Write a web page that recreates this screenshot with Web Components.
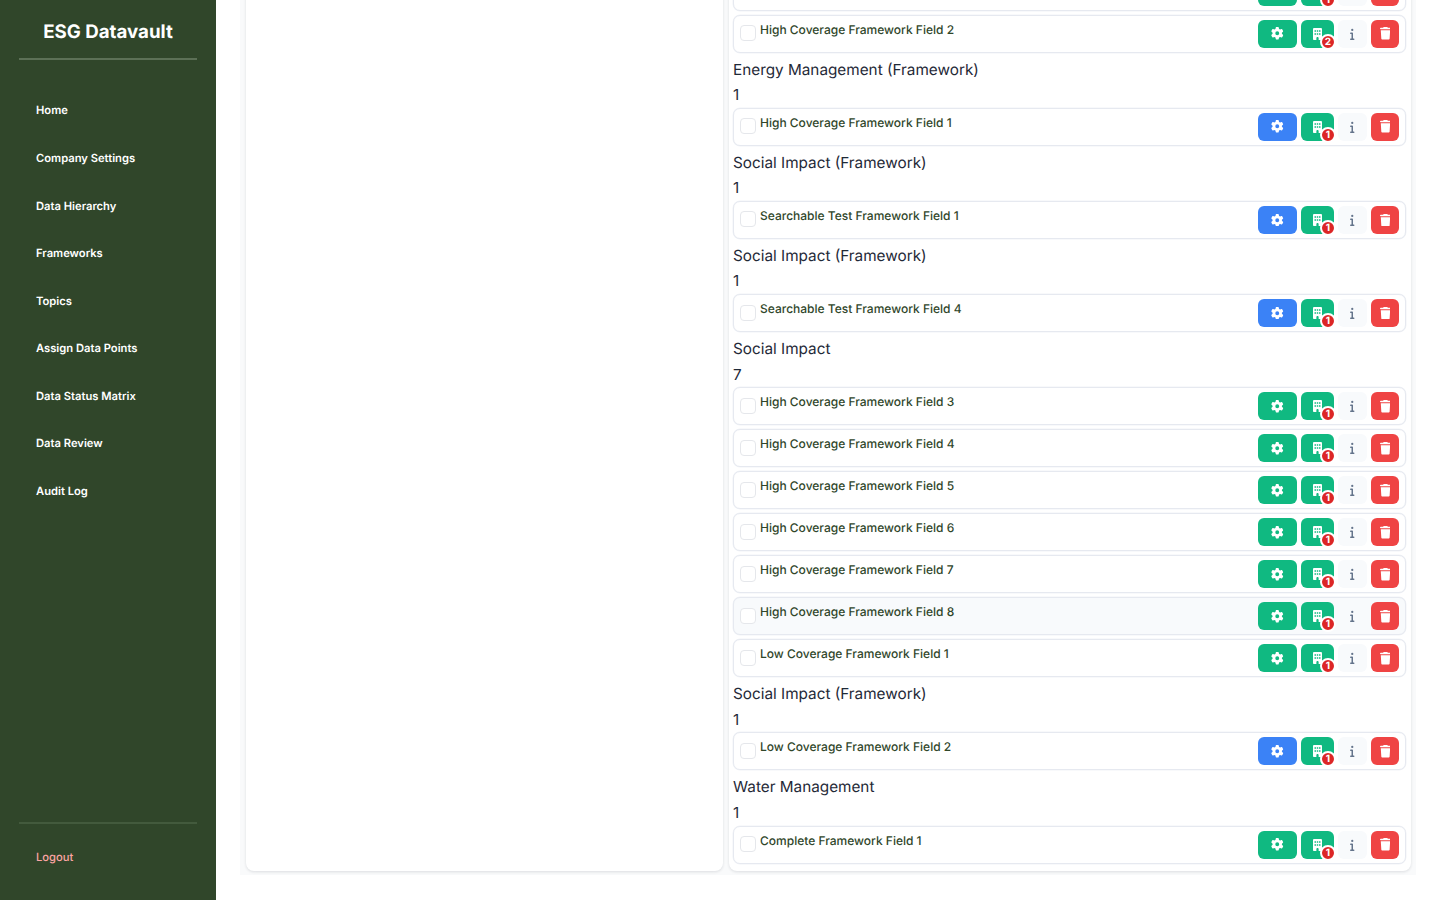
<!DOCTYPE html>
<html>
<head>
<meta charset="utf-8">
<title>ESG Datavault</title>
<style>
  html, body { margin: 0; height: 100%; background: #fff; font-family: Inter, "Liberation Sans", sans-serif; text-rendering: geometricPrecision; }
</style>
</head>
<body>
<esg-app></esg-app>

<script>
// FontAwesome 6 style glyphs, viewBox + path
const ICONS = {
  cog: ['0 0 512 512', 'M495.9 166.6c3.2 8.7 .5 18.4-6.4 24.6l-43.3 39.4c1.1 8.3 1.7 16.8 1.7 25.4s-.6 17.1-1.7 25.4l43.3 39.4c6.9 6.2 9.6 15.9 6.4 24.6c-4.4 11.9-9.7 23.3-15.8 34.3l-4.7 8.1c-6.6 11-14 21.4-22.1 31.2c-5.9 7.2-15.7 9.6-24.5 6.8l-55.7-17.7c-13.4 10.3-28.2 18.9-44 25.4l-12.5 57.1c-2 9.1-9 16.3-18.2 17.8c-13.8 2.3-28 3.5-42.5 3.5s-28.7-1.2-42.5-3.5c-9.2-1.5-16.2-8.7-18.2-17.8l-12.5-57.1c-15.8-6.5-30.6-15.1-44-25.4L83.1 425.9c-8.8 2.8-18.6 .3-24.5-6.8c-8.1-9.8-15.5-20.2-22.1-31.2l-4.7-8.1c-6.1-11-11.4-22.4-15.8-34.3c-3.2-8.7-.5-18.4 6.4-24.6l43.3-39.4C64.6 273.1 64 264.6 64 256s.6-17.1 1.7-25.4L22.4 191.2c-6.9-6.2-9.6-15.9-6.4-24.6c4.4-11.9 9.7-23.3 15.8-34.3l4.7-8.1c6.6-11 14-21.4 22.1-31.2c5.9-7.2 15.7-9.6 24.5-6.8l55.7 17.7c13.4-10.3 28.2-18.9 44-25.4l12.5-57.1c2-9.1 9-16.3 18.2-17.8C227.3 1.2 241.5 0 256 0s28.7 1.2 42.5 3.5c9.2 1.5 16.2 8.7 18.2 17.8l12.5 57.1c15.8 6.5 30.6 15.1 44 25.4l55.7-17.7c8.8-2.8 18.6-.3 24.5 6.8c8.1 9.8 15.5 20.2 22.1 31.2l4.7 8.1c6.1 11 11.4 22.4 15.8 34.3zM256 336a80 80 0 1 0 0-160 80 80 0 1 0 0 160z'],
  building: ['0 0 384 512', 'M48 0C21.5 0 0 21.5 0 48V464c0 26.5 21.5 48 48 48h96V432c0-26.5 21.5-48 48-48s48 21.5 48 48v80h96c26.5 0 48-21.5 48-48V48c0-26.5-21.5-48-48-48H48zM64 240c0-8.8 7.2-16 16-16h32c8.8 0 16 7.2 16 16v32c0 8.8-7.2 16-16 16H80c-8.8 0-16-7.2-16-16V240zm112-16h32c8.8 0 16 7.2 16 16v32c0 8.8-7.2 16-16 16H176c-8.8 0-16-7.2-16-16V240c0-8.8 7.2-16 16-16zm80 16c0-8.8 7.2-16 16-16h32c8.8 0 16 7.2 16 16v32c0 8.8-7.2 16-16 16H272c-8.8 0-16-7.2-16-16V240zM80 96h32c8.8 0 16 7.2 16 16v32c0 8.8-7.2 16-16 16H80c-8.8 0-16-7.2-16-16V112c0-8.8 7.2-16 16-16zm80 16c0-8.8 7.2-16 16-16h32c8.8 0 16 7.2 16 16v32c0 8.8-7.2 16-16 16H176c-8.8 0-16-7.2-16-16V112zM272 96h32c8.8 0 16 7.2 16 16v32c0 8.8-7.2 16-16 16H272c-8.8 0-16-7.2-16-16V112c0-8.8 7.2-16 16-16z'],
  info: ['0 0 192 512', 'M48 80a48 48 0 1 1 96 0A48 48 0 1 1 48 80zM0 224c0-17.7 14.3-32 32-32H96c17.7 0 32 14.3 32 32V448h32c17.7 0 32 14.3 32 32s-14.3 32-32 32H32c-17.7 0-32-14.3-32-32s14.3-32 32-32H64V256H32c-17.7 0-32-14.3-32-32z'],
  trash: ['0 0 448 512', 'M135.2 17.7L128 32H32C14.3 32 0 46.3 0 64S14.3 96 32 96H416c17.7 0 32-14.3 32-32s-14.3-32-32-32H320l-7.2-14.3C307.4 6.8 296.3 0 284.2 0H163.8c-12.1 0-23.2 6.8-28.6 17.7zM416 128H32L53.2 467c1.6 25.3 22.6 45 47.9 45H346.9c25.3 0 46.3-19.7 47.9-45L416 128z']
};

function svgIcon(name, size) {
  const [box, d] = ICONS[name];
  return `<svg viewBox="${box}" height="${size}" fill="currentColor" aria-hidden="true"><path d="${d}"/></svg>`;
}

class EsgNavLink extends HTMLElement {
  constructor() {
    super();
    this.attachShadow({mode: 'open'}).innerHTML = `
      <style>
        :host { display: block; padding: 14.2px 17px; font-size: 11.2px; line-height: 19.2px; font-weight: 600; color: #fff; }
        :host([danger]) { color: #fca5a5; font-weight: 500; }
      </style>
      <slot></slot>`;
  }
}

class EsgSidebar extends HTMLElement {
  constructor() {
    super();
    const links = ['Home', 'Company Settings', 'Data Hierarchy', 'Frameworks', 'Topics', 'Assign Data Points', 'Data Status Matrix', 'Data Review', 'Audit Log'];
    this.attachShadow({mode: 'open'}).innerHTML = `
      <style>
        :host { display: flex; flex-direction: column; flex: none; width: 216px; height: 100vh; box-sizing: border-box; padding: 0 19px; background: #30462a; color: #fff; }
        h1 { margin: 0; padding: 17px 0 11px; font-size: 18.7px; line-height: 30px; font-weight: 700; text-align: center; border-bottom: 2px solid #5c7056; }
        nav { flex: 1; padding-top: 27.2px; }
        footer { border-top: 2px solid #435a3d; padding-top: 9px; margin-bottom: 19px; }
      </style>
      <h1>ESG Datavault</h1>
      <nav>${links.map(l => `<esg-nav-link>${l}</esg-nav-link>`).join('')}</nav>
      <footer><esg-nav-link danger>Logout</esg-nav-link></footer>`;
  }
}

class EsgIconButton extends HTMLElement {
  constructor() {
    super();
    const icon = this.getAttribute('icon');
    const sizes = {cog: 12.5, building: 12, info: 12, trash: 12.5};
    const badge = this.getAttribute('badge');
    this.attachShadow({mode: 'open'}).innerHTML = `
      <style>
        :host { position: relative; display: flex; align-items: center; justify-content: center; flex: none; height: 28px; width: var(--w, 28px); border-radius: 6px; color: #fff; background: var(--bg, #10b981); }
        .badge { position: absolute; right: -2px; bottom: -2px; box-sizing: border-box; width: 16px; height: 16px; border: 2px solid #fff; border-radius: 50%; background: #dc2626; color: #fff; font-size: 10px; font-weight: 700; line-height: 12px; text-align: center; }
      </style>
      ${svgIcon(icon, sizes[icon])}
      ${badge ? `<span class="badge">${badge}</span>` : ''}`;
  }
}

class EsgFieldRow extends HTMLElement {
  constructor() {
    super();
    const cogBg = this.hasAttribute('blue') ? '#3b82f6' : '#10b981';
    const badge = this.getAttribute('badge') || '1';
    this.attachShadow({mode: 'open'}).innerHTML = `
      <style>
        :host { display: flex; justify-content: space-between; box-sizing: border-box; height: 38px; margin-bottom: 4px; padding: 3.5px 6px 3.5px 5.5px; border: 1px solid #e6e9f0; border-radius: 7px; background: #fff; box-shadow: 0 0 0 .5px #f1f3f7; }
        :host([hover]) { background: #f8fafc; }
        .left { display: flex; align-items: flex-start; gap: 4.5px; padding-top: 5.5px; }
        .box { flex: none; box-sizing: border-box; width: 16px; height: 16px; margin-top: .5px; border: 1.5px solid #e5e7eb; border-radius: 4px; background: #fff; }
        .label { font-size: 12px; line-height: 16px; font-weight: 500; color: #30462a; margin-top: -3px; }
        .actions { display: flex; align-items: center; gap: 4px; }
        .cog { --bg: ${cogBg}; --w: 39px; }
        .building { --w: 33px; }
        .info { --bg: #f8fafc; --w: 29px; color: #64748b; }
        :host([hover]) .info { --bg: transparent; }
        .trash { --bg: #ef4444; }
      </style>
      <div class="left"><span class="box"></span><span class="label"><slot></slot></span></div>
      <div class="actions">
        <esg-icon-button class="cog" icon="cog"></esg-icon-button>
        <esg-icon-button class="building" icon="building" badge="${badge}"></esg-icon-button>
        <esg-icon-button class="info" icon="info"></esg-icon-button>
        <esg-icon-button class="trash" icon="trash"></esg-icon-button>
      </div>`;
  }
}

class EsgFieldGroup extends HTMLElement {
  constructor() {
    super();
    this.attachShadow({mode: 'open'}).innerHTML = `
      <style>
        :host { display: block; font-size: 15.3px; line-height: 25.6px; color: #1f2937; }
      </style>
      <div>${this.getAttribute('name') || ''}</div>
      <div>${this.getAttribute('count') || ''}</div>
      <slot></slot>`;
  }
}

class EsgCard extends HTMLElement {
  constructor() {
    super();
    this.attachShadow({mode: 'open'}).innerHTML = `
      <style>
        :host { display: block; box-sizing: border-box; padding: 0 5px 0 4px; background: #fff; border-radius: 0 0 8px 8px; box-shadow: 0 1px 3px rgba(15, 23, 42, .12); overflow: hidden; }
      </style>
      <slot></slot>`;
  }
}

class EsgApp extends HTMLElement {
  constructor() {
    super();
    const groups = [
      // the page is scrolled: the first row only shows its buttons, its label is above the fold
      {rows: [['', {}], ['High Coverage Framework Field 2', {badge: 2}]]},
      {name: 'Energy Management (Framework)', rows: [['High Coverage Framework Field 1', {blue: 1}]]},
      {name: 'Social Impact (Framework)', rows: [['Searchable Test Framework Field 1', {blue: 1}]]},
      {name: 'Social Impact (Framework)', rows: [['Searchable Test Framework Field 4', {blue: 1}]]},
      {name: 'Social Impact', rows: [
        ['High Coverage Framework Field 3', {}], ['High Coverage Framework Field 4', {}],
        ['High Coverage Framework Field 5', {}], ['High Coverage Framework Field 6', {}],
        ['High Coverage Framework Field 7', {}], ['High Coverage Framework Field 8', {hover: 1}],
        ['Low Coverage Framework Field 1', {}]]},
      {name: 'Social Impact (Framework)', rows: [['Low Coverage Framework Field 2', {blue: 1}]]},
      {name: 'Water Management', rows: [['Complete Framework Field 1', {}]]}
    ];
    const rowHtml = ([label, o]) => `<esg-field-row${o.blue ? ' blue' : ''}${o.hover ? ' hover' : ''}${o.badge ? ` badge="${o.badge}"` : ''}>${label}</esg-field-row>`;
    const groupHtml = g => `<esg-field-group name="${g.name || ''}" count="${g.name ? g.rows.length : ''}">${g.rows.map(rowHtml).join('')}</esg-field-group>`;
    this.attachShadow({mode: 'open'}).innerHTML = `
      <style>
        :host { display: flex; height: 100vh; overflow: hidden; }
        main { flex: 1; min-width: 0; height: 100vh; overflow: hidden; padding: 0 24px; }
        .panel { display: grid; grid-template-columns: 477fr 682fr; gap: 6px; margin-top: -79.5px; height: 954.5px; box-sizing: border-box; padding: 0 5px 4px 6px; background: #f9fafb; }
        esg-field-group:first-child { margin-top: 52px; }
      </style>
      <esg-sidebar></esg-sidebar>
      <main>
        <div class="panel">
          <esg-card></esg-card>
          <esg-card>${groups.map(groupHtml).join('')}</esg-card>
        </div>
      </main>`;
  }
}

customElements.define('esg-nav-link', EsgNavLink);
customElements.define('esg-sidebar', EsgSidebar);
customElements.define('esg-icon-button', EsgIconButton);
customElements.define('esg-field-row', EsgFieldRow);
customElements.define('esg-field-group', EsgFieldGroup);
customElements.define('esg-card', EsgCard);
customElements.define('esg-app', EsgApp);
</script>
</body>
</html>
